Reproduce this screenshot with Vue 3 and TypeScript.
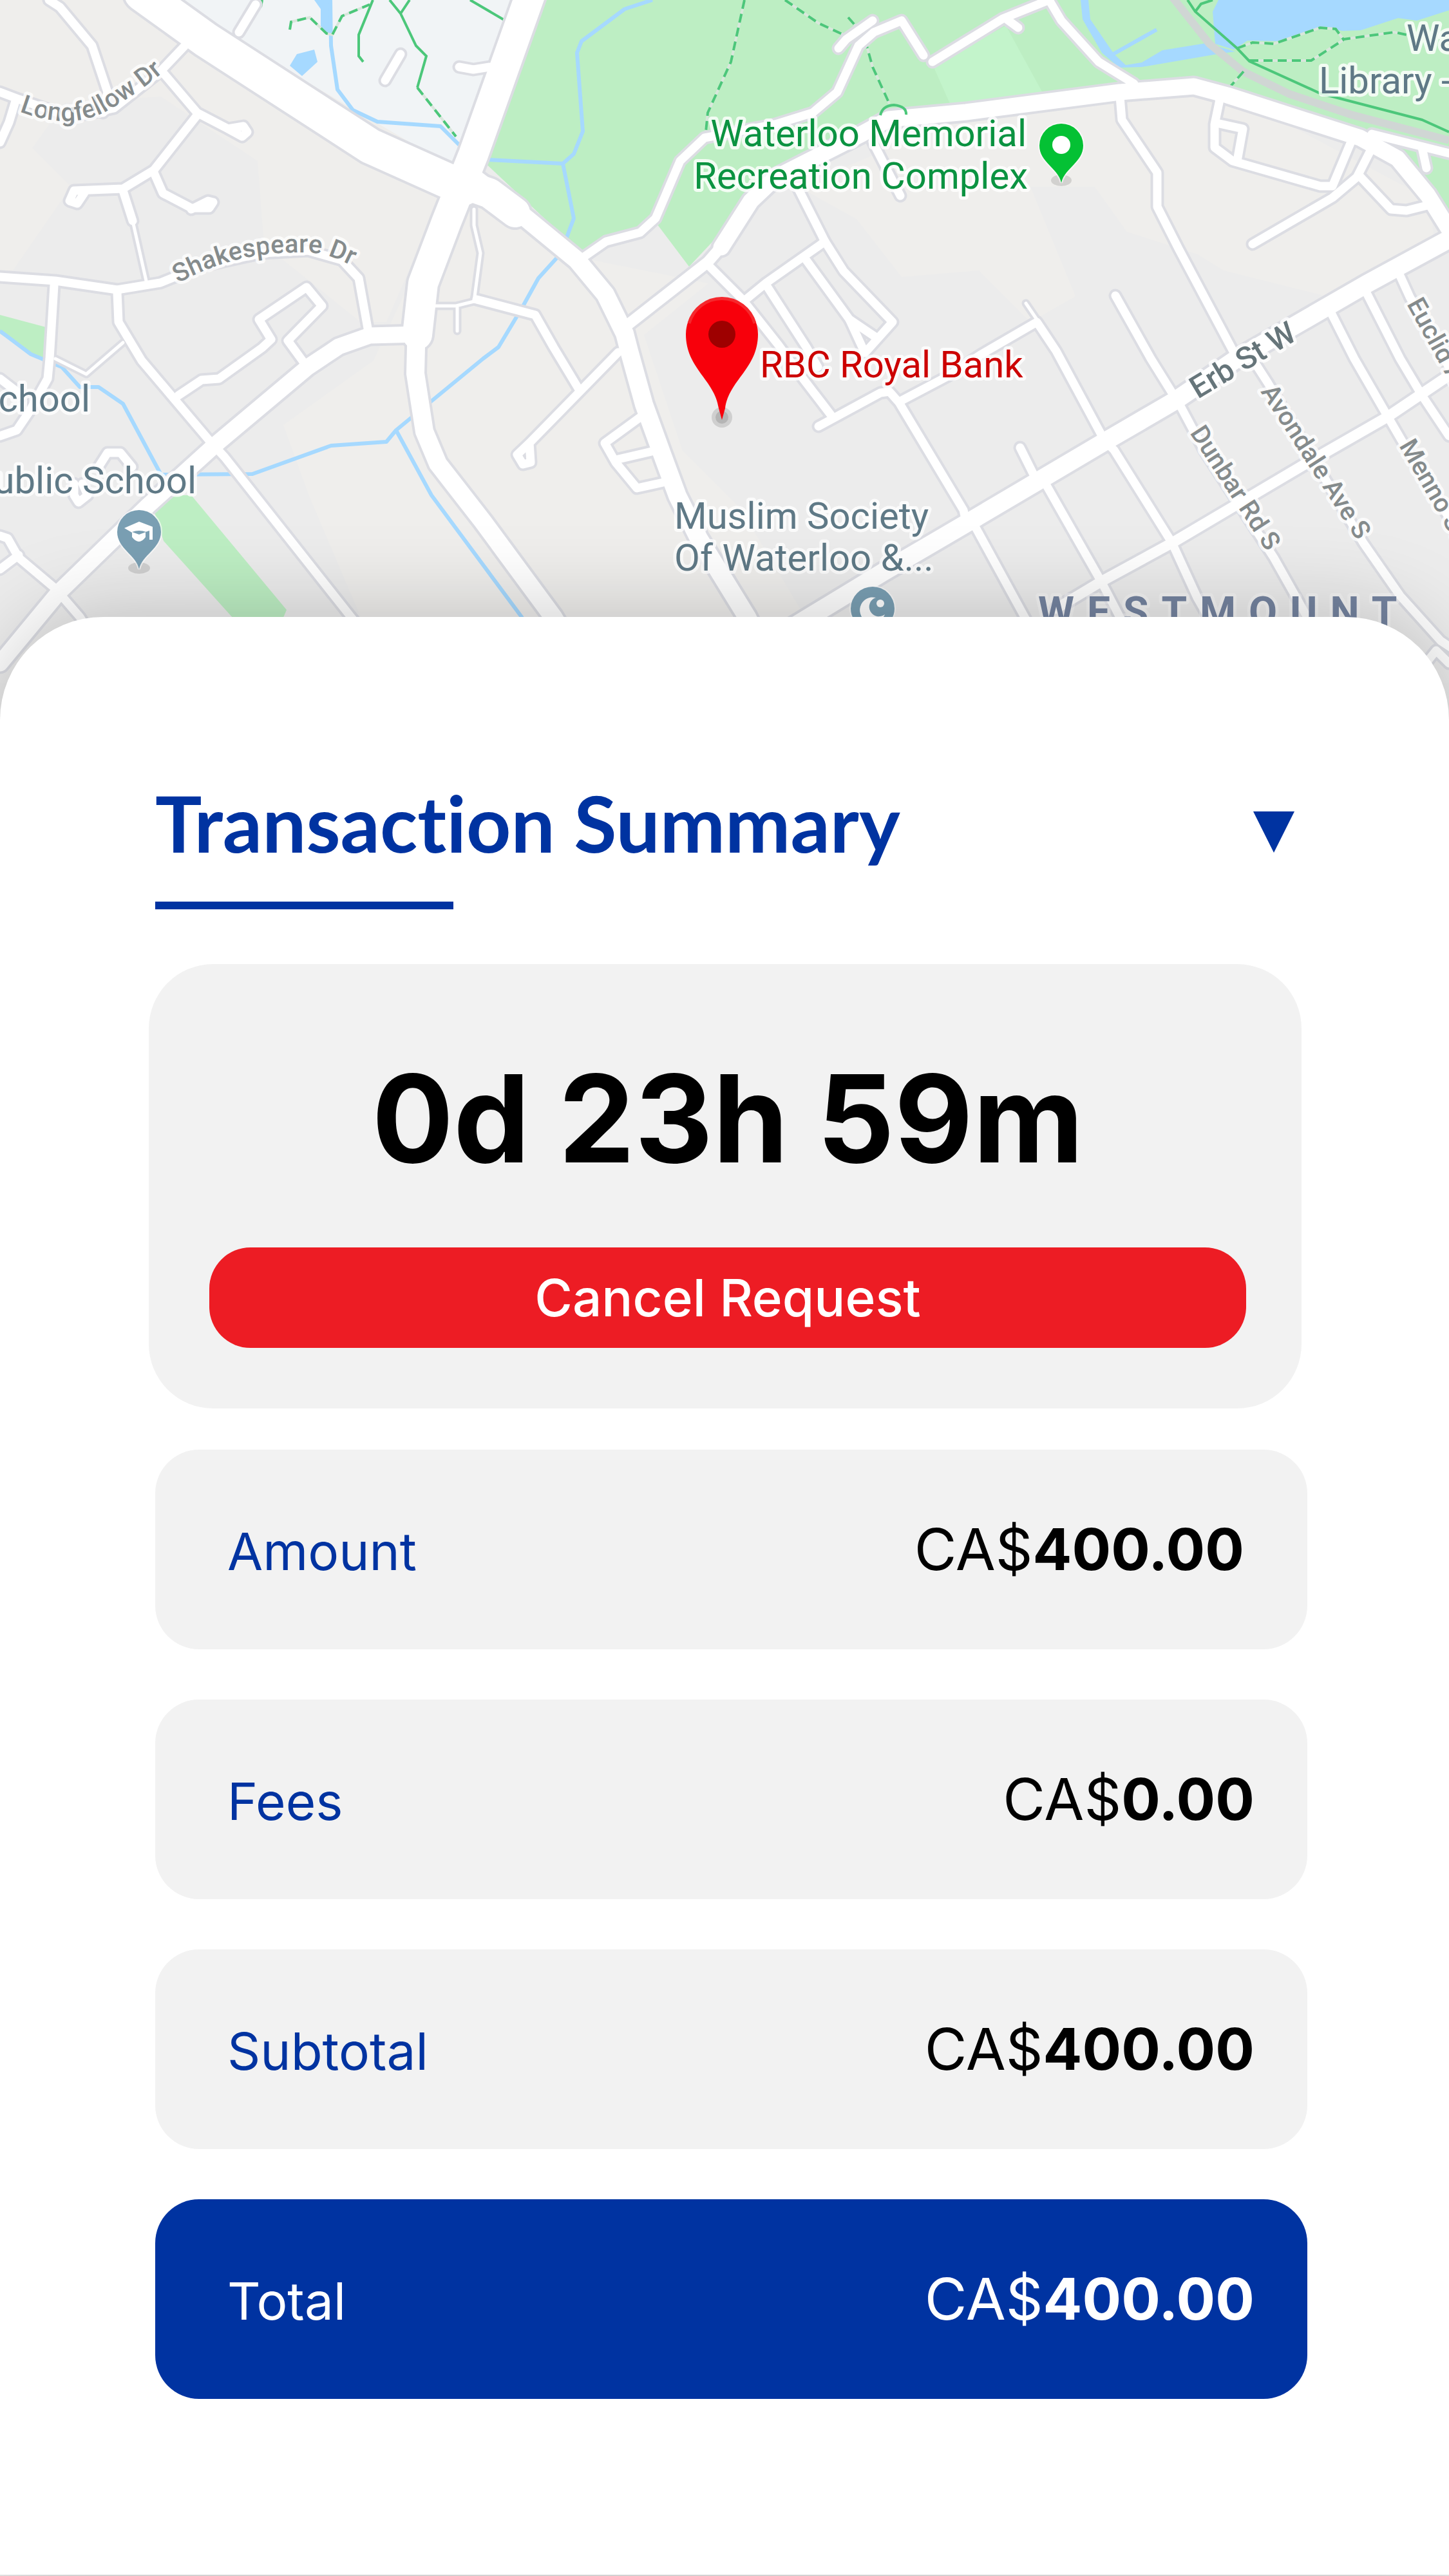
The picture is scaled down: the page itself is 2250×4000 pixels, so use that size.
<script setup lang="ts">
import { ref } from 'vue'

interface Row {
  label: string
  amount: string
  total?: boolean
}

const rows: Row[] = [
  { label: 'Amount', amount: '400.00' },
  { label: 'Fees', amount: '0.00' },
  { label: 'Subtotal', amount: '400.00' },
  { label: 'Total', amount: '400.00', total: true },
]

const open = ref(true)

// Road centre lines, grouped by the width of the carriageway.
const roads: { width: number; lines: string[] }[] = [
  {
    width: 5,
    lines: [
      '206,343 227,436',
      '191,532 134,581 86,557',
      '674,475 708,475 736,468 760,472',
      '710,478 710,514',
      '736,468 746,393 736,350 736,325',
      '1593,471 1610,496',
    ],
  },
  {
    width: 13,
    lines: [
      '76,0 93,11 143,71 167,143 160,175',
      '0,143 29,154 110,182 177,168 249,111 287,71',
      '24,157 14,190 0,221',
      '255,115 306,175 354,200 378,196 384,205 376,212 354,200',
      '306,179 239,264 191,293 115,296 108,312 120,316 132,298',
      '239,268 253,300 297,323 325,323 331,314 323,312 297,325',
      '191,296 206,343',
      '0,430 86,436 182,450 249,439 311,414 407,393 478,389 531,404 557,432 572,515',
      '84,443 77,557 74,588 45,640 26,668 0,677',
      '182,454 184,500 220,560 325,684 349,710 545,958 640,1075',
      '277,614 313,590 340,588 407,540 421,527 402,496 476,446 500,475 447,529 474,566',
      '0,832 12,836 29,866 86,914 124,958 150,1000',
      '0,884 29,862',
      '153,725 167,703 187,703 205,725',
      '115,751 115,769 122,780 136,769 128,751',
      '0,588 35,615',
      '740,465 831,489 860,540 898,603',
      '960,547 822,688 803,706 812,721 824,718 822,688',
      '998,645 939,688 956,718 989,758 1030,749',
      '956,714 1012,701',
      '1434,86 1400,32 1357,50 1333,71 1300,143 1262,175 1204,193 1094,214 1056,250 1018,339 994,361 941,375 905,400',
      '1302,75 1314,61 1355,32',
      '1448,96 1500,64 1557,29 1629,0 1648,32 1706,96 1761,130',
      '1562,29 1581,43',
      '1355,220 1398,304',
      '1238,290 1281,375 1310,421 1386,500 1343,548 1319,496 1252,404',
      '1319,496 1362,525',
      '1281,375 1190,439 1152,470',
      '1099,411 1152,464 1209,536 1247,588 1290,644',
      '1190,443 1252,539 1270,570',
      '1271,662 1367,610 1381,608 1396,625 1496,792 1500,810',
      '1398,623 1472,584 1524,550 1610,500 1640,545 1715,684 1730,699 1820,843 1859,928 1900,1000',
      '1732,459 1787,557 1825,618',
      '1584,695 1609,745',
      '1620,745 1710,903 1745,970',
      '1510,810 1591,958 1620,1010',
      '1739,150 1742,186 1797,268 1797,321 1830,386 1920,555',
      '1895,150 1886,193 1886,229 1914,250 2050,289 2069,289 2098,220',
      '1889,191 1930,200 1921,250',
      '2130,230 2107,275 2069,307 1945,379',
      '2110,272 2160,325 2184,327 2220,318',
      '1830,625 1870,700 1978,866 2045,985',
      '1940,550 1969,595 2117,843 2174,925 2237,995 2260,1010',
      '2190,1060 2230,1010 2250,1030',
      '2064,480 2103,557 2155,647 2180,690 2260,820',
      '2117,445 2174,557 2208,614 2250,677',
      '2168,415 2189,461 2250,570',
      '2130,208 2250,238',
      '2208,229 2215,261',
      '397,7 371,50',
      '622,84 598,125',
      '713,104 735,108 760,104',
    ],
  },
  { width: 16, lines: ['2250,583 2155,647 2026,721 1820,843 1710,903 1640,945'] },
  { width: 17, lines: ['970,508 1099,407 1133,368 1150,340'] },
  {
    width: 25,
    lines: [
      '1120,384 1166,312 1204,276 1338,208 1380,185 1500,174 1739,143 1854,134 1906,148 2112,214 2170,246 2217,303 2250,356',
      '650,519 574,521 526,538 478,570 335,690 230,785 91,920 0,1030',
    ],
  },
  {
    width: 28,
    lines: [
      '2260,366 2122,441 1916,560 1825,622 1715,686 1500,813 1372,888 1257,958 1180,1005',
      '647,500 645,580 659,670 680,720 750,810 859,958 920,1060',
      '735,275 800,325 896,404 940,457 970,518 977,545 1000,628 1028,705 1052,770 1085,836 1160,958 1210,1060',
    ],
  },
  { width: 46, lines: ['824,-10 735,240 693,345 657,440 648,520', '690,275 760,300 800,330'] },
  { width: 54, lines: ['220,-10 320,62 575,227 720,292'] },
]

const streams: string[] = [
  '513,0 514,71 524,139 548,171 586,189 684,196 713,225',
  '1013,0 970,14 903,64 896,82 905,204 891,239 874,254 757,248',
  '874,254 891,339 879,371',
  '865,400 836,432 810,479 774,539 750,557 615,668 600,686 514,692 392,736 250,737 191,627 153,601 124,601 96,570 48,550 0,514',
  '615,668 670,769 750,877 810,958 870,1060',
  '1725,86 1796,46',
]

const trails: string[] = [
  '450,46 452,34 481,27 507,52 516,54 531,25 574,7',
  '648,136 708,212',
  '1156,0 1135,96 1099,175 1096,205',
  '1219,0 1271,36 1310,54',
  '1317,27 1341,54 1355,104 1381,161',
  '1921,75 1945,66 1978,68 2050,43 2074,45 2086,61 2165,50 2184,54',
  '1940,94 2036,94 2086,62',
  '1931,111 1909,136',
]

const solidTrails: string[] = [
  '579,0 557,54 557,87 564,96',
  '605,0 622,21 646,71 662,87 648,136',
  '636,0 622,21',
  '407,0 405,11',
  '730,0 788,34',
  '1844,0 1856,18 1921,75 1940,95 2050,145 2208,186 2250,205',
  '1856,18 1865,6 1883,0',
]
</script>

<template>
  <main class="page">
    <svg class="map" viewBox="0 0 2250 1060" role="img" aria-label="Map around RBC Royal Bank">
      <defs>
        <path id="longfellow" d="M30 173 C75 190 120 196 165 173 C205 150 235 130 285 84" />
        <path id="shakespeare" d="M276 440 C350 400 410 392 470 392 C500 392 520 398 560 420" />
      </defs>
      <rect width="2250" height="1060" fill="#ececec" />
      <path class="warm" d="M0 0H560L700 270L600 500H560L410 380L400 250L250 150L100 160L50 230L110 290L20 420L0 420Z" />
      <path class="warm" d="M700 300L900 400L1100 440L1000 520L1060 700L1150 790L1250 958H560L480 770L440 660L580 560Z" />
      <path class="warm" d="M1240 290L1500 180L1900 140L2220 310L2230 400L2100 470L1900 420L1860 395L1750 360L1700 290L1600 290L1670 460L1600 500L1520 420L1400 430L1330 340Z" />
      <path fill="#f1f4f6" d="M260 0H800L720 270Z" />
      <path class="park" d="M835 0H2250V340L2170 250L2100 205L1854 134L1500 175L1338 208L1204 276L1166 312L1070 414L1018 345L903 393L750 250Z" />
      <path fill="#c3f4cb" d="M1448 100L1562 40L1625 155L1480 172Z" />
      <path class="park" d="M0 489L75 509L67 556L48 550L0 518Z" />
      <path class="park" d="M239 793L268 769H297L445 947L431 980H380L254 840Z" />
      <path class="water" d="M1892 0L1883 18L1887 68L1916 77L1937 63L1983 64L2050 42L2085 48L2113 47L2171 28L2200 32L2250 16V0Z" />
      <path class="water" d="M1678 0L1681 30L1711 82L1738 105L1773 104L1890 84L1918 80L1873 67L1805 78L1773 97L1748 101L1730 84L1693 30L1690 0Z" />
      <path class="water" d="M488 0L498 14V44L514 56V0Z" />
      <path class="water" d="M461 84L488 77L493 96L469 118L450 102Z" />
      <g class="stream"><polyline v-for="p in streams" :key="p" :points="p" /></g>
      <polyline class="rail" points="1820,-5 1878,68 1930,111 2002,146 2098,178 2250,218" />
      <g class="trail base"><polyline v-for="p in trails" :key="p" :points="p" /></g>
      <g class="trail dash"><polyline v-for="p in trails" :key="p" :points="p" /></g>
      <g class="trail"><polyline v-for="p in solidTrails" :key="p" :points="p" /></g>

      <g class="road casing">
        <template v-for="r in roads" :key="r.width">
          <polyline v-for="p in r.lines" :key="p" :points="p" :stroke-width="r.width + 8" />
        </template>
      </g>
      <g class="road surface">
        <template v-for="r in roads" :key="r.width">
          <polyline v-for="p in r.lines" :key="p" :points="p" :stroke-width="r.width" />
        </template>
      </g>
      <path class="trail" d="M1367 179Q1370 164 1388 163Q1408 165 1407 178" />

      <g class="street">
        <text><textPath href="#longfellow">Longfellow Dr</textPath></text>
        <text><textPath href="#shakespeare">Shakespeare Dr</textPath></text>
        <text transform="translate(1847 672) rotate(57)">Dunbar Rd S</text>
        <text transform="translate(1957 608) rotate(57)">Avondale Ave S</text>
        <text transform="translate(2172 692) rotate(60)">Menno St</text>
        <text transform="translate(2184 472) rotate(61)">Euclid Ave</text>
        <text class="arterial" transform="translate(1860 620) rotate(-31)">Erb St W</text>
      </g>

      <g class="place slate">
        <text x="140" y="639" text-anchor="end">chool</text>
        <text x="305" y="766" text-anchor="end">ublic School</text>
        <text x="1047" y="821">Muslim Society</text>
        <text x="1047" y="886">Of Waterloo &amp;...</text>
        <text x="2184" y="79">Wa</text>
        <text x="2048" y="145">Library -</text>
      </g>
      <g class="place green" text-anchor="end">
        <text x="1594" y="227">Waterloo Memorial</text>
        <text x="1596" y="293">Recreation Complex</text>
      </g>
      <text class="place red" x="1180" y="586">RBC Royal Bank</text>
      <text class="district" x="1612" y="972">WESTMOUNT</text>

      <ellipse class="spot" cx="1648" cy="280" rx="16" ry="9" />
      <path class="pin" fill="#04c134" d="M1648 284C1644 262 1614 252 1614 226A34 34 0 0 1 1682 226C1682 252 1652 262 1648 284Z" />
      <circle cx="1648" cy="225" r="14" fill="#fff" />

      <ellipse class="spot" cx="216" cy="882" rx="17" ry="9" />
      <path class="pin" fill="#7a9fb3" d="M216 884C212 862 182 852 182 826A34 34 0 0 1 250 826C250 852 220 862 216 884Z" />
      <path fill="#fff" d="M193 820L216 810L237 818V838H232V824L226 826V834Q216 848 205 834V827Z" />
      <path d="M205 826Q216 822 227 826L216 830Z" fill="#7a9fb3" />

      <path class="pin" fill="#7a9fb3" d="M1355 1003C1351 981 1321 971 1321 945A34 34 0 0 1 1389 945C1389 971 1359 981 1355 1003Z" />
      <path fill="#fff" d="M1360 928A20 20 0 1 0 1374 954A15 15 0 1 1 1360 928Z" />
      <circle cx="1367" cy="937" r="6" fill="#fff" />

      <circle class="spot" cx="1121" cy="648" r="16" />
      <circle class="spot" cx="1121" cy="648" r="10" />
      <path fill="#f8000b" d="M1121 652L1116 634C1110 590 1065 572 1065 519A56 56 0 0 1 1177 519C1177 572 1132 590 1126 634Z" />
      <path fill="none" stroke="#f5282d" stroke-width="5" d="M1070 502A53 53 0 0 1 1172 502" />
      <circle cx="1121" cy="519" r="21" fill="#9e0000" />
    </svg>

    <section class="sheet" aria-labelledby="summary-title">
      <header class="head">
        <h1 id="summary-title">Transaction Summary</h1>
        <button
          class="toggle"
          type="button"
          aria-label="Toggle transaction summary"
          :aria-expanded="open"
          @click="open = !open"
        >
          <svg viewBox="0 0 64 64" aria-hidden="true"><path d="M0 0H64L32 64Z" /></svg>
        </button>
      </header>

      <div class="timer">
        <p class="time">0d 23h 59m</p>
        <button class="cancel" type="button">Cancel Request</button>
      </div>

      <dl v-show="open" class="rows">
        <div v-for="row in rows" :key="row.label" class="row" :class="{ total: row.total }">
          <dt>{{ row.label }}</dt>
          <dd>CA$<strong>{{ row.amount }}</strong></dd>
        </div>
      </dl>
    </section>
  </main>
</template>

<style>
body {
  margin: 0;
  background: #ebebeb;
}
</style>

<style scoped>
.page {
  display: flex;
  flex-direction: column;
  min-height: 100vh;
  font-family: Inter, "Liberation Sans", sans-serif;
}

/* Map */
.map {
  display: block;
  width: 100%;
  font-family: Roboto, "Liberation Sans", sans-serif;
}
.warm { fill: #efeeec; }
.park { fill: #bdeec3; }
.water { fill: #a6d9ff; }
.stream polyline { fill: none; stroke: #a6d9ff; stroke-width: 6px; stroke-linejoin: round; }
.rail { fill: none; stroke: #d0d6d4; stroke-width: 12px; }
.trail { fill: none; stroke: #4cc77a; stroke-width: 4px; }
.trail.base { stroke: #d9e6dc; }
.trail.dash { stroke-dasharray: 14 8; }
.road polyline { fill: none; stroke-linejoin: round; stroke-linecap: round; }
.casing { stroke: #dcdde3; }
.surface { stroke: #fff; }
.map text {
  paint-order: stroke;
  stroke: rgba(255, 255, 255, 0.8);
  stroke-width: 10px;
  stroke-linejoin: round;
}
.street { fill: #858b8c; font-size: 40px; font-weight: 500; }
.arterial { fill: #66757a; font-size: 48px; }
.place { font-size: 58px; }
.slate { fill: #5f7986; }
.green { fill: #0b9341; }
.red { fill: #cc0000; }
.map .district {
  fill: #7584a0;
  stroke: rgba(255, 255, 255, 0.4);
  font-size: 64px;
  font-weight: 700;
  letter-spacing: 20px;
}
.pin { stroke: rgba(255, 255, 255, 0.6); stroke-width: 4px; paint-order: stroke; }
.spot { fill: rgba(0, 0, 0, 0.12); }

/* Sheet */
.sheet {
  flex: 1;
  box-sizing: border-box;
  position: relative;
  margin: -102px 0 2px;
  padding: 248px 220px 272px 231px;
  border-radius: 160px 160px 0 0;
  background: #fff;
  box-shadow: 0 0 140px rgba(0, 0, 0, 0.22);
}
.head {
  display: flex;
  justify-content: space-between;
  align-items: baseline;
  position: relative;
  margin: 0 20px 0 10px;
  padding-bottom: 62px;
}
.head::after {
  content: "";
  position: absolute;
  left: 0;
  bottom: 0;
  width: 463px;
  height: 12px;
  background: #0033a1;
}
h1 {
  margin: 0;
  font: 700 121px/144px Lato, "Open Sans", sans-serif;
  font-variant-ligatures: none;
  color: #0033a1;
}
.toggle {
  padding: 0;
  border: 0;
  background: none;
  cursor: pointer;
}
.toggle svg {
  display: block;
  width: 64px;
  height: 64px;
  fill: #0033a1;
}
.timer {
  box-sizing: border-box;
  margin: 85px 9px 64px 0;
  padding: 128px 86px 94px 94px;
  border-radius: 100px;
  background: #f2f2f2;
}
.time {
  margin: 0 0 88px;
  font-size: 188px;
  font-weight: 700;
  line-height: 224px;
  text-align: center;
  color: #000;
}
.cancel {
  display: block;
  width: 100%;
  height: 156px;
  padding: 0;
  border: 0;
  border-radius: 64px;
  background: #ed1c24;
  color: #fff;
  font-family: inherit;
  font-size: 80px;
  font-weight: 500;
  line-height: 156px;
  cursor: pointer;
}
.rows {
  display: flex;
  flex-direction: column;
  gap: 78px;
  margin: 0 0 0 10px;
}
.row {
  box-sizing: border-box;
  display: flex;
  justify-content: space-between;
  align-items: baseline;
  min-height: 310px;
  padding: 100px 82px 90px 112px;
  border-radius: 68px;
  background: #f2f2f2;
  color: #0033a1;
}
.row:first-child { padding-right: 98px; }
dt { font-size: 80px; line-height: 110px; }
dd {
  margin: 0;
  font-size: 90px;
  line-height: 110px;
  color: #000;
}
dd strong { font-weight: 700; }
.total { background: #0033a1; color: #fff; }
.total dd { color: #fff; }
</style>
